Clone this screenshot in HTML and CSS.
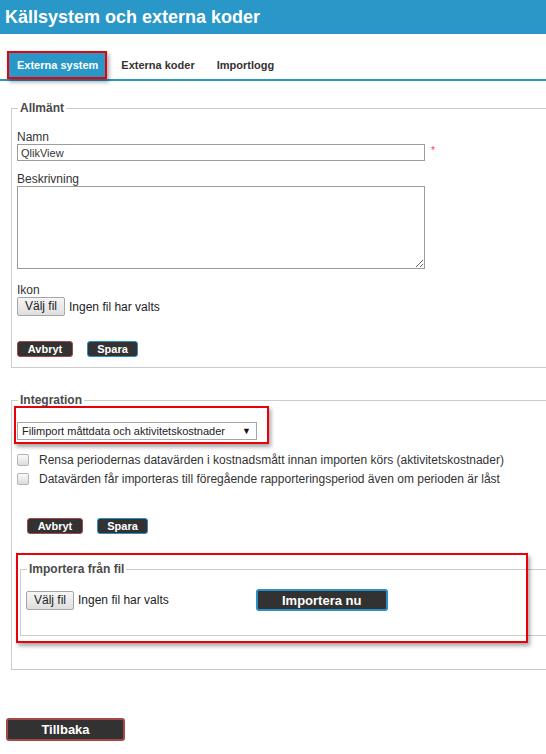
FILE: index.html
```html
<!DOCTYPE html>
<html lang="sv">
<head>
    <meta charset="UTF-8">
    <meta name="viewport" content="width=device-width, initial-scale=1.0">
    <title>Källsystem och externa koder</title>
    <link rel="stylesheet" href="styles.css">
</head>
<body>
    <header class="page-header">
        <h1>Källsystem och externa koder</h1>
    </header>

    <nav class="tabs">
        <a class="tab tab-active">Externa system</a>
        <a class="tab">Externa koder</a>
        <a class="tab">Importlogg</a>
    </nav>

    <main class="content">
        <fieldset class="group">
            <legend>Allmänt</legend>

            <div class="field field-first">
                <label for="name">Namn</label>
                <div class="field-row">
                    <input type="text" id="name" class="text-input" value="QlikView">
                    <span class="required">*</span>
                </div>
            </div>

            <div class="field">
                <label for="description">Beskrivning</label>
                <textarea id="description" class="text-area"></textarea>
            </div>

            <div class="field field-file">
                <label>Ikon</label>
                <div class="file-picker">
                    <span class="file-button">Välj fil</span>
                    <span class="file-name">Ingen fil har valts</span>
                </div>
            </div>

            <div class="actions">
                <button class="btn btn-cancel">Avbryt</button>
                <button class="btn btn-save">Spara</button>
            </div>
        </fieldset>

        <fieldset class="group group-integration">
            <legend>Integration</legend>

            <div class="highlight highlight-select">
                <div class="select-box">
                    <span>Filimport måttdata och aktivitetskostnader</span>
                    <span class="select-arrow">▼</span>
                </div>
            </div>

            <div class="checks">
                <label class="check-row">
                    <span class="checkbox"></span>
                    Rensa periodernas datavärden i kostnadsmått innan importen körs (aktivitetskostnader)
                </label>
                <label class="check-row">
                    <span class="checkbox"></span>
                    Datavärden får importeras till föregående rapporteringsperiod även om perioden är låst
                </label>
            </div>

            <div class="actions actions-indent">
                <button class="btn btn-cancel">Avbryt</button>
                <button class="btn btn-save">Spara</button>
            </div>

            <div class="highlight-import">
                <fieldset class="group group-import">
                    <legend>Importera från fil</legend>
                    <div class="import-row">
                        <div class="file-picker">
                            <span class="file-button">Välj fil</span>
                            <span class="file-name">Ingen fil har valts</span>
                        </div>
                        <button class="btn btn-import">Importera nu</button>
                    </div>
                </fieldset>
            </div>
        </fieldset>
    </main>

    <footer class="page-footer">
        <button class="btn btn-back">Tillbaka</button>
    </footer>
</body>
</html>
```

FILE: styles.css
```css
:root {
    --primary: #2997c7;
    --text: #333333;
    --legend: #4a4a4a;
    --border: #cccccc;
    --input-border: #9c9c9c;
    --dark: #323232;
    --annotation: #e8000b;
    --annotation-shadow: 2px 3px 4px rgba(0, 0, 0, 0.35);
}

* {
    box-sizing: border-box;
}

body {
    margin: 0;
    font-family: 'Liberation Sans', Arial, sans-serif;
    font-size: 12px;
    color: var(--text);
    background-color: #ffffff;
}

.page-header {
    height: 34px;
    background-color: var(--primary);
    padding-left: 5px;
    display: flex;
    align-items: center;
}

.page-header h1 {
    margin: 0;
    font-size: 18px;
    font-weight: 700;
    color: #ffffff;
}

/* Tabs */
.tabs {
    display: flex;
    margin-top: 17px;
    padding-left: 7px;
    border-bottom: 2px solid var(--primary);
}

.tab {
    height: 28px;
    line-height: 28px;
    padding: 0 11px;
    font-size: 11px;
    font-weight: 700;
    color: var(--text);
}

.tab-active {
    padding: 0 7px 0 8px;
    margin-right: 3px;
    line-height: 24px;
    color: #ffffff;
    background-color: var(--primary);
    border: 2px solid var(--annotation);
    box-shadow: var(--annotation-shadow);
}

.content {
    padding-left: 11px;
}

.group {
    margin: 20px 0 0 0;
    padding: 0 5px 10px 5px;
    border: 1px solid var(--border);
    border-right: none;
    min-width: 0;
}

.group legend {
    margin-left: 1px;
    padding: 0 2px;
    font-size: 12px;
    font-weight: 700;
    line-height: 14px;
    color: var(--legend);
}

.group-integration {
    margin-top: 25px;
}

.field {
    margin-top: 11px;
}

.field-first {
    margin-top: 15px;
}

.field-file {
    margin-top: 14px;
}

.field label {
    display: block;
    line-height: 14px;
}

.field-row {
    display: flex;
    align-items: flex-start;
}

.text-input {
    width: 408px;
    height: 17px;
    padding: 0 3px;
    border: 1px solid var(--input-border);
    font-family: inherit;
    font-size: 11px;
    color: var(--text);
}

.required {
    margin-left: 6px;
    font-size: 10px;
    line-height: 14px;
    color: #ff3b3b;
}

.text-area {
    display: block;
    width: 408px;
    height: 83px;
    border: 1px solid var(--input-border);
    font-family: inherit;
}

.file-picker {
    display: flex;
    align-items: center;
}

.file-button {
    height: 19px;
    line-height: 17px;
    padding: 0 7px;
    border: 1px solid #a6a6a6;
    border-radius: 2px;
    background: linear-gradient(#f6f6f6, #dedede);
    color: #222222;
}

.file-name {
    margin-left: 4px;
    color: #222222;
}

/* Buttons */
.actions {
    display: flex;
    gap: 14px;
    margin-top: 25px;
}

.btn {
    font-family: inherit;
    font-weight: 700;
    color: #ffffff;
    background-color: var(--dark);
    border: 1px solid var(--dark);
    border-radius: 3px;
    cursor: pointer;
}

.actions .btn {
    height: 16px;
    padding: 0 9px;
    font-size: 11px;
    line-height: 14px;
}

.btn-cancel {
    border-color: #a54848;
}

.btn-save {
    border-color: #2b8ec4;
}

.actions .btn-cancel {
    width: 56px;
}

.actions .btn-save {
    width: 51px;
}

/* Integration */
.highlight {
    border: 2px solid var(--annotation);
    box-shadow: var(--annotation-shadow);
}

.highlight-select {
    width: 255px;
    margin: -1px 0 0 -3px;
    padding: 14px 10px 2px 1px;
}

.select-box {
    display: flex;
    align-items: center;
    justify-content: space-between;
    height: 18px;
    padding: 0 5px 0 4px;
    border: 1px solid #a6a6a6;
    font-size: 11px;
    color: #222222;
}

.select-arrow {
    font-size: 9px;
    color: #111111;
}

.checks {
    margin-top: 6px;
}

.check-row {
    display: flex;
    align-items: center;
    height: 19px;
    color: #333333;
}

.checkbox {
    width: 12px;
    height: 12px;
    margin-right: 10px;
    border: 1px solid #b4b4b4;
    border-radius: 2px;
    background: linear-gradient(#fafafa, #dcdcdc);
}

.actions-indent {
    margin: 30px 0 0 10px;
}

/* the red frame is drawn over the nested fieldset, which runs on to the right */
.highlight-import {
    position: relative;
    margin: 19px -5px 16px -1px;
    padding: 9px 0 7px 4px;
}

.highlight-import::after {
    content: '';
    position: absolute;
    top: 0;
    left: 0;
    width: 508px;
    bottom: 0;
    border: 2px solid var(--annotation);
    box-shadow: var(--annotation-shadow);
    pointer-events: none;
}

.group-import {
    margin: 0;
    padding: 0 5px 24px 5px;
}

.import-row {
    display: flex;
    align-items: center;
    margin-top: 13px;
}

.btn-import {
    width: 132px;
    height: 22px;
    margin-left: 87px;
    font-size: 13px;
    border: 2px solid #2b8ec4;
}

/* Footer */
.page-footer {
    padding: 48px 0 0 6px;
}

.btn-back {
    width: 119px;
    height: 23px;
    font-size: 13px;
    border: 2px solid #a54848;
}
```
